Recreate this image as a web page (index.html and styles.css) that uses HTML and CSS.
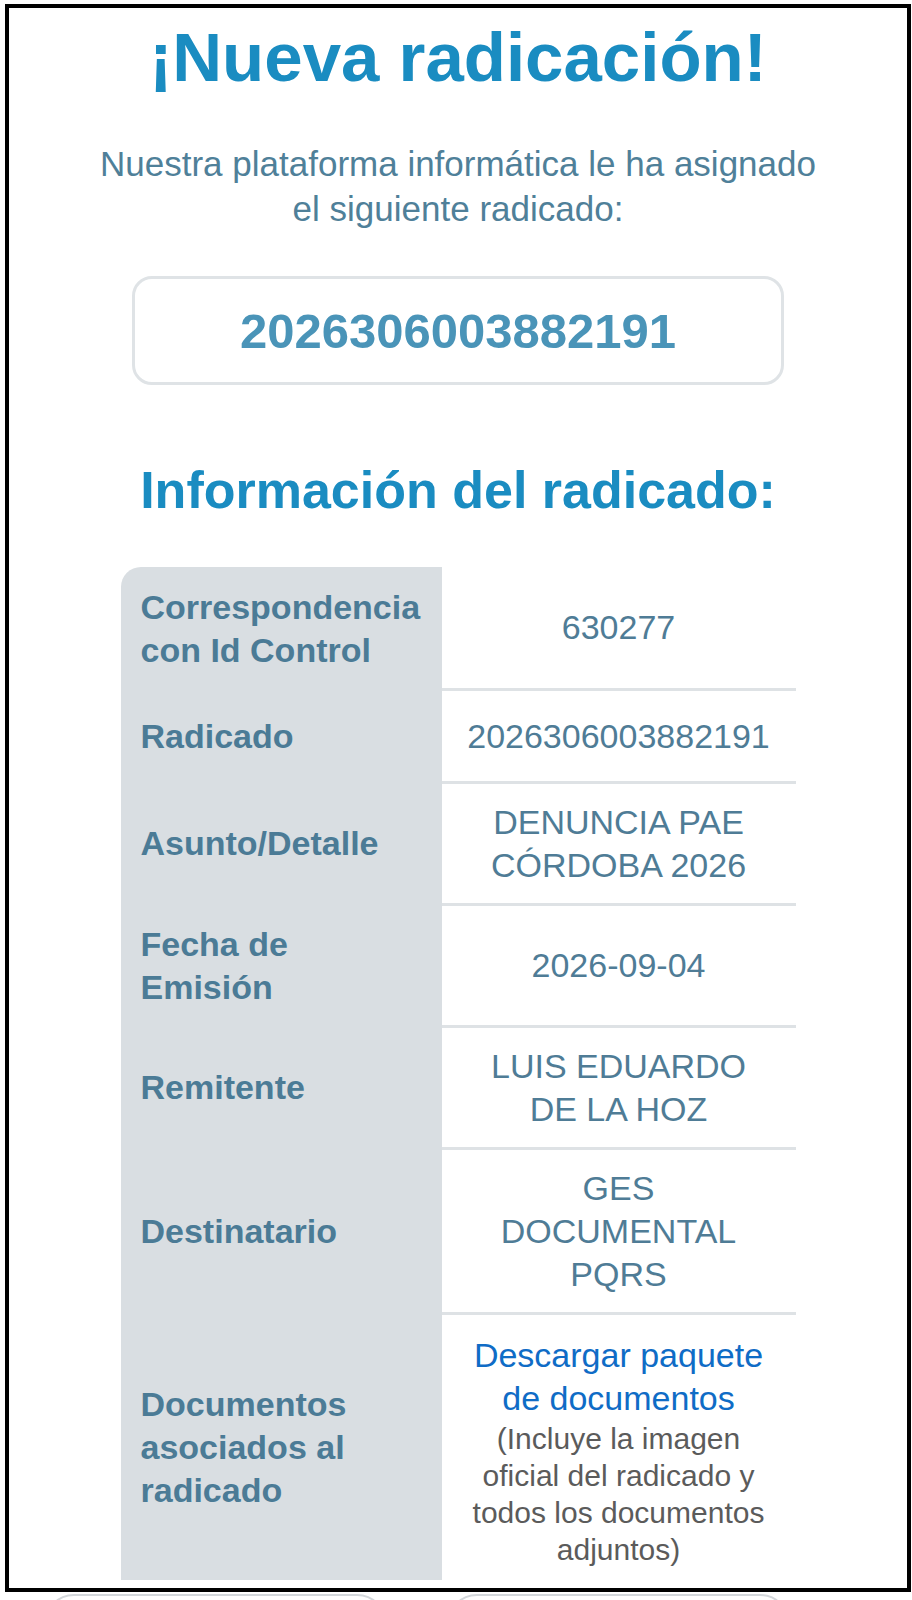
FILE: index.html
```html
<!DOCTYPE html>
<html lang="es">
<head>
<meta charset="utf-8">
<title>Nueva radicación</title>
<link rel="stylesheet" href="styles.css">
</head>
<body>
<div class="frame">
  <h1 class="title">¡Nueva radicación!</h1>
  <p class="intro">Nuestra plataforma informática le ha asignado<br>el siguiente radicado:</p>
  <div class="number-box">2026306003882191</div>
  <h2 class="section-title">Información del radicado:</h2>
  <div class="info-table">
    <div class="label first">Correspondencia con Id Control</div>
    <div class="value first">630277</div>

    <div class="label">Radicado</div>
    <div class="value">2026306003882191</div>

    <div class="label">Asunto/Detalle</div>
    <div class="value">DENUNCIA PAE CÓRDOBA 2026</div>

    <div class="label">Fecha de Emisión</div>
    <div class="value">2026-09-04</div>

    <div class="label">Remitente</div>
    <div class="value">LUIS EDUARDO DE LA HOZ</div>

    <div class="label">Destinatario</div>
    <div class="value">GES DOCUMENTAL PQRS</div>

    <div class="label last">Documentos asociados al radicado</div>
    <div class="value last">
      <a class="link" href="#">Descargar paquete de documentos</a>
      <span class="note">(Incluye la imagen oficial del radicado y todos los documentos adjuntos)</span>
    </div>
  </div>
</div>
<div class="actions">
  <div class="btn"></div>
  <div class="btn"></div>
</div>
</body>
</html>
```
FILE: styles.css
```css
html, body {
  margin: 0;
  padding: 0;
  background: #ffffff;
}

body {
  font-family: "Liberation Sans", Arial, sans-serif;
  overflow: hidden;
}

.frame {
  box-sizing: border-box;
  width: 906px;
  margin: 4px 0 0 5px;
  border: 4px solid #000000;
  padding: 0 0 8px 0;
  display: flex;
  flex-direction: column;
  align-items: center;
}

.title {
  margin: 10px 0 0 0;
  font-size: 69px;
  line-height: 80px;
  font-weight: bold;
  color: #1a8cc1;
  text-align: center;
}

.intro {
  margin: 43px 0 0 0;
  font-size: 35px;
  line-height: 45px;
  color: #4f8099;
  text-align: center;
}

.number-box {
  box-sizing: border-box;
  margin-top: 45px;
  width: 652px;
  height: 109px;
  border: 3px solid #dfe3e6;
  border-radius: 20px;
  display: flex;
  align-items: center;
  justify-content: center;
  font-size: 49px;
  font-weight: bold;
  color: #4a94b8;
}

.section-title {
  margin: 75px 0 0 0;
  font-size: 52px;
  line-height: 60px;
  font-weight: bold;
  color: #1a8cc1;
  text-align: center;
}

.info-table {
  margin-top: 47px;
  display: grid;
  grid-template-columns: 321px 354px;
  grid-auto-rows: minmax(93px, auto);
}

.label {
  box-sizing: border-box;
  background: #d9dee2;
  padding: 16.5px 20px;
  border-bottom: 3px solid transparent;
  font-size: 34px;
  line-height: 43px;
  font-weight: bold;
  color: #4b7b96;
  display: flex;
  align-items: center;
}

.label.first {
  border-top-left-radius: 20px;
  padding-top: 18.5px;
}

.label.last {
  border-bottom: none;
}

.value {
  box-sizing: border-box;
  padding: 16.5px 22px;
  border-bottom: 3px solid #dee2e5;
  font-size: 34px;
  line-height: 43px;
  color: #4f7c96;
  text-align: center;
  display: flex;
  flex-direction: column;
  align-items: center;
  justify-content: center;
}

.value.last {
  border-bottom: none;
  padding-top: 19px;
  padding-bottom: 12px;
}

.link {
  color: #0f6cc6;
  text-decoration: none;
}

.note {
  font-size: 30px;
  line-height: 37px;
  color: #5b5b5b;
}

.actions {
  display: flex;
  gap: 60px;
  margin: 2px 0 0 44px;
}

.btn {
  box-sizing: border-box;
  width: 343px;
  height: 60px;
  border: 2px solid #d3d7db;
  border-radius: 30px;
}
```
